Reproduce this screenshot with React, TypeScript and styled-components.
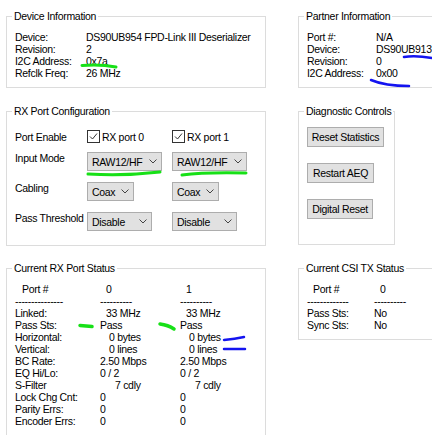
import React from "react";
import styled, { createGlobalStyle } from "styled-components";

const GlobalStyle = createGlobalStyle`
  html, body {
    margin: 0;
    padding: 0;
    background: #fff;
  }
  body {
    font-family: "Liberation Sans", Arial, sans-serif;
    font-size: 10.5px;
    letter-spacing: -0.3px;
    color: #000;
    overflow: hidden;
  }
`;

const Page = styled.div`
  position: relative;
  box-sizing: border-box;
  width: 432px;
  height: 435px;
  overflow: hidden;
  padding: 10px 0 0 6px;
  display: grid;
  grid-template-columns: 260px 160px;
  grid-template-rows: 79px 141px 1fr;
  column-gap: 32px;
  row-gap: 16px;
  align-items: start;
`;

const GroupBox = styled.fieldset<{ $height: number; $top: number; $width?: number }>`
  box-sizing: border-box;
  margin: 0;
  min-width: 0;
  height: ${(p) => p.$height}px;
  width: ${(p) => (p.$width ? `${p.$width}px` : "auto")};
  justify-self: ${(p) => (p.$width ? "start" : "stretch")};
  align-self: start;
  border: 1px solid #dcdcdc;
  padding: ${(p) => p.$top}px 8px 0 8px;

  & > legend {
    padding: 0 2px;
    margin-left: -3px;
    line-height: 12px;
    font-size: 10.5px;
    white-space: nowrap;
    background: #fff;
  }
`;

const InfoGrid = styled.div<{ $label: number }>`
  display: grid;
  grid-template-columns: ${(p) => p.$label}px auto;
  line-height: 12px;
  white-space: nowrap;
`;

const ConfigGrid = styled.div`
  display: grid;
  grid-template-columns: 72px 85px auto;
  grid-template-rows: 22px 30px 30px 19px;
  align-items: start;
  white-space: nowrap;
`;

const FieldLabel = styled.div<{ $offset?: number }>`
  line-height: 12px;
  padding-top: ${(p) => p.$offset ?? 0}px;
`;

const CheckRow = styled.label`
  display: flex;
  align-items: center;
  gap: 2px;
  height: 13px;
`;

const CheckBox = styled.span`
  box-sizing: border-box;
  width: 13px;
  height: 13px;
  border: 1px solid #333;
  background: #fff;
  display: flex;
  align-items: center;
  justify-content: center;
`;

const Combo = styled.div<{ $width: number }>`
  box-sizing: border-box;
  width: ${(p) => p.$width}px;
  height: 19px;
  display: flex;
  align-items: center;
  justify-content: space-between;
  padding: 0 4px;
  background: #e1e1e1;
  border: 1px solid #adadad;
`;

const ButtonStack = styled.div`
  display: flex;
  flex-direction: column;
  align-items: flex-start;
  gap: 16px;
`;

const Button = styled.button<{ $width: number }>`
  box-sizing: border-box;
  width: ${(p) => p.$width}px;
  height: 20px;
  padding: 0;
  background: #e1e1e1;
  border: 1px solid #adadad;
  font-family: inherit;
  font-size: 10.5px;
  letter-spacing: -0.3px;
  color: #000;
`;

const StatusGrid = styled.div<{ $label: number; $col: number }>`
  display: grid;
  grid-template-columns: ${(p) => p.$label}px repeat(2, ${(p) => p.$col}px);
  line-height: 12px;
  white-space: nowrap;
`;

const Cell = styled.div<{ $indent?: number }>`
  padding-left: ${(p) => p.$indent ?? 0}px;
`;

const Marks = styled.svg`
  position: absolute;
  top: 0;
  left: 0;
  pointer-events: none;
`;

const Chevron = () => (
  <svg width="8" height="5" viewBox="0 0 8 5">
    <path d="M0.5 0.5 L4 4 L7.5 0.5" fill="none" stroke="#444" strokeWidth="1" />
  </svg>
);

const Check = () => (
  <svg width="11" height="11" viewBox="0 0 11 11">
    <path d="M2 5.5 L4.5 8 L9 2.5" fill="none" stroke="#333" strokeWidth="1" />
  </svg>
);

const deviceInfo = [
  ["Device:", "DS90UB954 FPD-Link III Deserializer"],
  ["Revision:", "2"],
  ["I2C Address:", "0x7a"],
  ["Refclk Freq:", "26 MHz"],
];

const partnerInfo = [
  ["Port #:", "N/A"],
  ["Device:", "DS90UB913"],
  ["Revision:", "0"],
  ["I2C Address:", "0x00"],
];

type Row = [string, string, number];

const rxStatus: Row[] = [
  ["Linked:", "33 MHz", 6],
  ["Pass Sts:", "Pass", 0],
  ["Horizontal:", "0 bytes", 9],
  ["Vertical:", "0 lines", 9],
  ["BC Rate:", "2.50 Mbps", 0],
  ["EQ Hi/Lo:", "0 / 2", 0],
  ["S-Filter", "7 cdly", 15],
  ["Lock Chg Cnt:", "0", 0],
  ["Parity Errs:", "0", 0],
  ["Encoder Errs:", "0", 0],
];

function InfoBox({ title, rows, label }: { title: string; rows: string[][]; label: number }) {
  return (
    <GroupBox $height={78} $top={9}>
      <legend>{title}</legend>
      <InfoGrid $label={label}>
        {rows.map(([k, v]) => (
          <React.Fragment key={k}>
            <div>{k}</div>
            <div>{v}</div>
          </React.Fragment>
        ))}
      </InfoGrid>
    </GroupBox>
  );
}

export default function App() {
  return (
    <>
      <GlobalStyle />
      <Page>
        <InfoBox title="Device Information" rows={deviceInfo} label={71} />
        <InfoBox title="Partner Information" rows={partnerInfo} label={69} />

        <GroupBox $height={141} $top={13}>
          <legend>RX Port Configuration</legend>
          <ConfigGrid>
            <FieldLabel $offset={1}>Port Enable</FieldLabel>
            {[0, 1].map((n) => (
              <CheckRow key={n}>
                <CheckBox>
                  <Check />
                </CheckBox>
                RX port {n}
              </CheckRow>
            ))}

            <FieldLabel>Input Mode</FieldLabel>
            {[0, 1].map((n) => (
              <Combo key={n} $width={75}>
                RAW12/HF <Chevron />
              </Combo>
            ))}

            <FieldLabel>Cabling</FieldLabel>
            {[0, 1].map((n) => (
              <Combo key={n} $width={47}>
                Coax <Chevron />
              </Combo>
            ))}

            <FieldLabel>Pass Threshold</FieldLabel>
            {[0, 1].map((n) => (
              <Combo key={n} $width={65}>
                Disable <Chevron />
              </Combo>
            ))}
          </ConfigGrid>
        </GroupBox>

        <GroupBox $height={140} $top={10} $width={97}>
          <legend>Diagnostic Controls</legend>
          <ButtonStack>
            <Button $width={77}>Reset Statistics</Button>
            <Button $width={67}>Restart AEQ</Button>
            <Button $width={66}>Digital Reset</Button>
          </ButtonStack>
        </GroupBox>

        <GroupBox $height={200} $top={9}>
          <legend>Current RX Port Status</legend>
          <StatusGrid $label={85} $col={80}>
            <Cell $indent={7}>Port #</Cell>
            <Cell $indent={6}>0</Cell>
            <Cell $indent={6}>1</Cell>
            <Cell>---------------</Cell>
            <Cell>----------</Cell>
            <Cell>----------</Cell>
            {rxStatus.map(([k, v, indent]) => (
              <React.Fragment key={k}>
                <Cell>{k}</Cell>
                <Cell $indent={indent}>{v}</Cell>
                <Cell $indent={indent}>{v}</Cell>
              </React.Fragment>
            ))}
          </StatusGrid>
        </GroupBox>

        <GroupBox $height={78} $top={9}>
          <legend>Current CSI TX Status</legend>
          <StatusGrid $label={67} $col={60}>
            <Cell $indent={6}>Port #</Cell>
            <Cell $indent={6}>0</Cell>
            <Cell />
            <Cell>-------------</Cell>
            <Cell>----------</Cell>
            <Cell />
            <Cell>Pass Sts:</Cell>
            <Cell>No</Cell>
            <Cell />
            <Cell>Sync Sts:</Cell>
            <Cell>No</Cell>
            <Cell />
          </StatusGrid>
        </GroupBox>

        <Marks width="432" height="435" viewBox="0 0 432 435">
          <g fill="none" strokeLinecap="round" stroke="#17e017" strokeWidth="3">
            <path d="M82 65.5 Q100 64 116 67" />
            <path d="M88 174 Q125 176 160 172" />
            <path d="M182 175 Q205 172 246 173" />
            <path d="M80 325.5 L92 326.5" strokeWidth="3.5" />
            <path d="M160 324 Q168 325 174 329" strokeWidth="3.5" />
          </g>
          <g fill="none" strokeLinecap="round" stroke="#1414f0" strokeWidth="2.5">
            <path d="M404 57 Q415 55 432 58" />
            <path d="M371 80 Q385 86 409 86" />
            <path d="M224 340 Q235 339 244 337" />
            <path d="M224 349 L245 349" />
          </g>
        </Marks>
      </Page>
    </>
  );
}
